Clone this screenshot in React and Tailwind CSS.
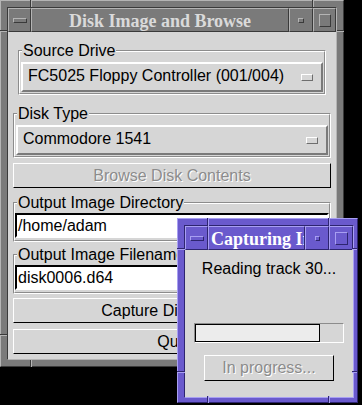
import React from "react";

function GrayBtn({ className = "", children }) {
  return (
    <div
      className={
        "flex items-center justify-center border border-t-[#b4b4b4] border-l-[#b4b4b4] border-r-[#3a3a3a] border-b-[#3a3a3a] bg-[#7a7a7a] " +
        className
      }
    >
      {children}
    </div>
  );
}

function PurpleBtn({ className = "", children }) {
  return (
    <div
      className={
        "flex items-center justify-center border border-t-[#a89ff2] border-l-[#a89ff2] border-r-[#2e2570] border-b-[#2e2570] bg-[#6a5acd] " +
        className
      }
    >
      {children}
    </div>
  );
}

function Notch({ className, purple }) {
  return (
    <div
      className={
        (purple ? "border-[#2e2570] " : "border-[#3a3a3a] ") + "absolute " + className
      }
    />
  );
}

function Frame({ label, className = "", innerClass = "", children }) {
  return (
    <div
      className={
        "relative border border-t-[#8c8c8c] border-l-[#8c8c8c] border-r-white border-b-white " +
        className
      }
    >
      <div
        className={
          "border border-t-white border-l-white border-r-[#8c8c8c] border-b-[#8c8c8c] " +
          innerClass
        }
      >
        {children}
      </div>
      <div className="absolute top-[-8px] left-[3px] bg-[#d6d6d6] px-[1px] text-[16px] leading-none text-black whitespace-nowrap">
        {label}
      </div>
    </div>
  );
}

function OptionButton({ children }) {
  return (
    <div className="flex h-[30px] items-center justify-between border-2 border-t-white border-l-white border-r-[#7a7a7a] border-b-[#7a7a7a] pl-[5px] pr-[8px] text-[16px] leading-none text-black">
      <span className="pb-[3px]">{children}</span>
      <div className="h-[7px] w-[12px] border border-t-white border-l-white border-r-[#6e6e6e] border-b-[#6e6e6e]" />
    </div>
  );
}

function PushButton({ disabled, className = "", children }) {
  return (
    <div
      className={
        "flex h-[25px] items-center justify-center border border-t-white border-l-white border-r-black border-b-black text-[16px] leading-none " +
        (disabled ? "text-[#8c8c8c] [text-shadow:1px_1px_0_#ffffff] " : "text-black ") +
        className
      }
    >
      {children}
    </div>
  );
}

function TextField({ children }) {
  return (
    <div className="flex h-[25px] items-center border-2 border-t-black border-l-black border-r-white border-b-white bg-white pl-[1px] text-[16px] leading-none text-black whitespace-nowrap overflow-hidden">
      {children}
    </div>
  );
}

function MainWindow() {
  return (
    <div className="absolute left-0 top-0 h-[367px] w-[344px] border border-t-[#b4b4b4] border-l-[#b4b4b4] border-r-[#3a3a3a] border-b-[#3a3a3a] bg-[#7a7a7a] p-[6px]">
      <Notch className="top-[-1px] left-[29px] h-[8px] w-[2px] border-l border-r border-r-[#b4b4b4]" />
      <Notch className="top-[-1px] left-[311px] h-[8px] w-[2px] border-l border-r border-r-[#b4b4b4]" />
      <Notch className="top-[358px] left-[29px] h-[8px] w-[2px] border-l border-r border-r-[#b4b4b4]" />
      <Notch className="top-[358px] left-[311px] h-[8px] w-[2px] border-l border-r border-r-[#b4b4b4]" />
      <Notch className="left-[-1px] top-[29px] w-[8px] h-[2px] border-t border-b border-b-[#b4b4b4]" />
      <Notch className="left-[335px] top-[29px] w-[8px] h-[2px] border-t border-b border-b-[#b4b4b4]" />
      <Notch className="left-[-1px] top-[333px] w-[8px] h-[2px] border-t border-b border-b-[#b4b4b4]" />
      <Notch className="left-[335px] top-[333px] w-[8px] h-[2px] border-t border-b border-b-[#b4b4b4]" />

      <div className="relative flex h-full flex-col border border-t-[#3a3a3a] border-l-[#3a3a3a] border-r-[#b4b4b4] border-b-[#b4b4b4]">
        <div className="flex h-[24px] shrink-0">
          <GrayBtn className="w-[23px]">
            <div className="h-[5px] w-[14px] border border-t-[#b4b4b4] border-l-[#b4b4b4] border-r-[#3a3a3a] border-b-[#3a3a3a]" />
          </GrayBtn>
          <GrayBtn className="flex-1 font-['Liberation_Serif',serif] text-[18px] font-bold leading-none text-[#dadada]">
            <span className="pt-[1px]">Disk Image and Browse</span>
          </GrayBtn>
          <GrayBtn className="w-[24px]">
            <div className="h-[5px] w-[6px] border border-t-[#b4b4b4] border-l-[#b4b4b4] border-r-[#3a3a3a] border-b-[#3a3a3a]" />
          </GrayBtn>
          <GrayBtn className="w-[23px]">
            <div className="h-[13px] w-[12px] border border-t-[#b4b4b4] border-l-[#b4b4b4] border-r-[#3a3a3a] border-b-[#3a3a3a]" />
          </GrayBtn>
        </div>
        <div className="flex flex-1 flex-col bg-[#d6d6d6] px-[5px] font-['Liberation_Sans',Arial,sans-serif]">
          <Frame label="Source Drive" className="mx-[5px] mt-[18px]" innerClass="px-[1px] pt-[10px] pb-[1px]">
            <OptionButton>FC5025 Floppy Controller (001/004)</OptionButton>
          </Frame>
          <Frame label="Disk Type" className="mt-[18px]" innerClass="px-[1px] pt-[10px] pb-[1px]">
            <OptionButton>Commodore 1541</OptionButton>
          </Frame>
          <PushButton disabled className="mt-[5px]">
            Browse Disk Contents
          </PushButton>
          <Frame label="Output Image Directory" className="mt-[14px]" innerClass="pt-[9px] pb-[2px]">
            <TextField>/home/adam</TextField>
          </Frame>
          <Frame label="Output Image Filename" className="mt-[12px]" innerClass="pt-[9px] pb-[2px]">
            <TextField>disk0006.d64</TextField>
          </Frame>
          <PushButton className="mt-[4px]">Capture Disk Image</PushButton>
          <PushButton className="mt-[6px]">Quit</PushButton>
        </div>
      </div>
    </div>
  );
}

function Dialog() {
  return (
    <div className="absolute left-[177px] top-[218px] h-[185px] w-[181px] border border-t-[#a89ff2] border-l-[#a89ff2] border-r-[#2e2570] border-b-[#2e2570] bg-[#6a5acd] pt-[6px] pl-[6px] pr-[3px] pb-[4px]">
      <Notch purple className="top-[-1px] left-[29px] h-[8px] w-[2px] border-l border-r border-r-[#a89ff2]" />
      <Notch purple className="top-[-1px] left-[150px] h-[8px] w-[2px] border-l border-r border-r-[#a89ff2]" />
      <Notch purple className="top-[177px] left-[29px] h-[7px] w-[2px] border-l border-r border-r-[#a89ff2]" />
      <Notch purple className="top-[177px] left-[150px] h-[7px] w-[2px] border-l border-r border-r-[#a89ff2]" />
      <Notch purple className="left-[-1px] top-[29px] w-[8px] h-[2px] border-t border-b border-b-[#a89ff2]" />
      <Notch purple className="left-[174px] top-[29px] w-[5px] h-[2px] border-t border-b border-b-[#a89ff2]" />
      <Notch purple className="left-[-1px] top-[152px] w-[8px] h-[2px] border-t border-b border-b-[#a89ff2]" />
      <Notch purple className="left-[174px] top-[152px] w-[5px] h-[2px] border-t border-b border-b-[#a89ff2]" />

      <div className="flex h-full flex-col border border-t-[#2e2570] border-l-[#2e2570] border-r-[#a89ff2] border-b-[#a89ff2]">
        <div className="flex h-[24px] shrink-0">
          <PurpleBtn className="w-[23px]">
            <div className="h-[5px] w-[14px] border border-t-[#a89ff2] border-l-[#a89ff2] border-r-[#2e2570] border-b-[#2e2570]" />
          </PurpleBtn>
          <PurpleBtn className="min-w-0 flex-1 justify-start overflow-hidden pl-[2px] font-['Liberation_Serif',serif] text-[18px] font-bold leading-none text-white whitespace-nowrap">
            <span className="pt-[1px]">Capturing Image</span>
          </PurpleBtn>
          <PurpleBtn className="w-[24px]">
            <div className="h-[5px] w-[5px] border border-t-[#a89ff2] border-l-[#a89ff2] border-r-[#2e2570] border-b-[#2e2570]" />
          </PurpleBtn>
          <PurpleBtn className="w-[24px]">
            <div className="h-[13px] w-[13px] border border-t-[#a89ff2] border-l-[#a89ff2] border-r-[#2e2570] border-b-[#2e2570]" />
          </PurpleBtn>
        </div>
        <div className="flex flex-1 flex-col items-center bg-[#d6d6d6] font-['Liberation_Sans',Arial,sans-serif]">
          <div className="mt-[11px] text-[16px] leading-none text-black">Reading track 30...</div>
          <div className="mt-[46px] flex h-[20px] w-[150px] border border-t-[#8c8c8c] border-l-[#8c8c8c] border-r-white border-b-white">
            <div className="h-full w-[125px] border border-black bg-[#ececec]" />
          </div>
          <PushButton disabled className="mt-[12px] h-[26px] w-[130px]">
            In progress...
          </PushButton>
        </div>
      </div>
    </div>
  );
}

export default function App() {
  return (
    <div className="relative h-[405px] w-[362px] overflow-hidden bg-black">
      <MainWindow />
      <Dialog />
    </div>
  );
}
